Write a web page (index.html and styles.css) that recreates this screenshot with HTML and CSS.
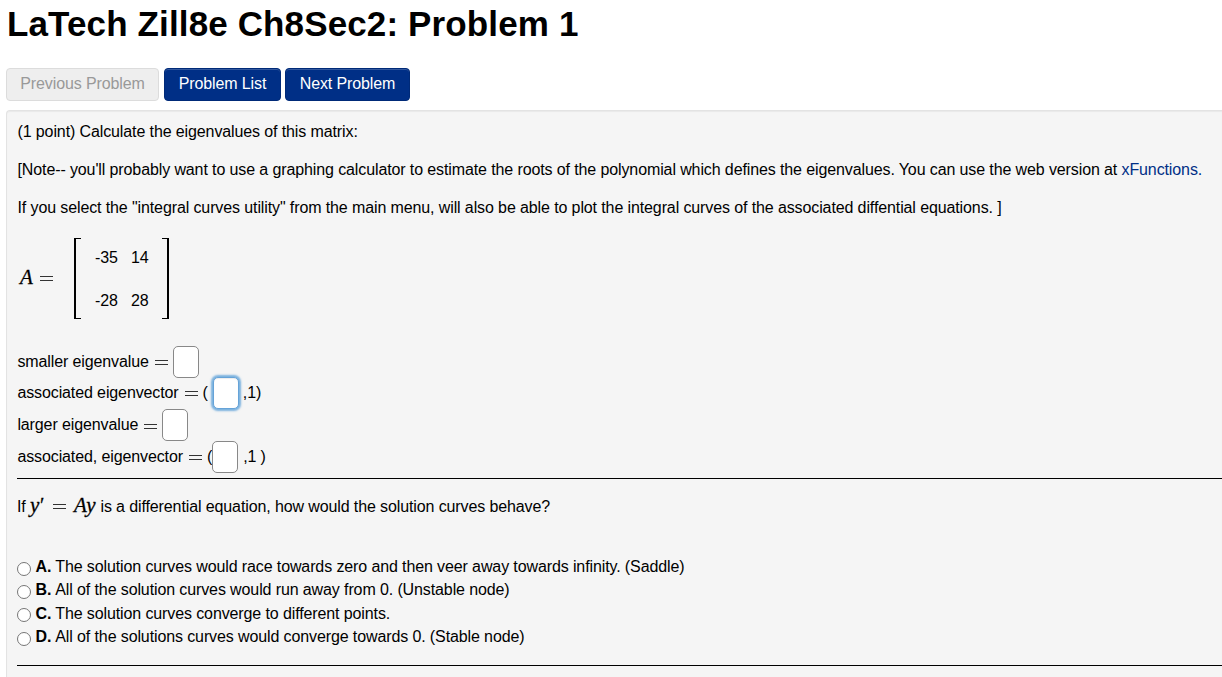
FILE: index.html
```html
<!DOCTYPE html>
<html lang="en">
<head>
    <meta charset="UTF-8">
    <title>LaTech Zill8e Ch8Sec2: Problem 1</title>
    <link rel="stylesheet" href="styles.css">
</head>
<body>
    <h1>LaTech Zill8e Ch8Sec2: Problem 1</h1>
    <div class="nav">
        <span class="btn disabled">Previous Problem</span>
        <a href="#" class="btn list">Problem List</a>
        <a href="#" class="btn next">Next Problem</a>
    </div>
    <div class="problem">
        <p>(1 point) Calculate the eigenvalues of this matrix:</p>
        <p>[Note-- you'll probably want to use a graphing calculator to estimate the roots of the polynomial which defines the eigenvalues. You can use the web version at <a href="#">xFunctions.</a></p>
        <p>If you select the "integral curves utility" from the main menu, will also be able to plot the integral curves of the associated diffential equations. ]</p>
        <div class="matrix">
            <span class="math name"><i>A</i><span class="eq"></span></span>
            <div class="bracket left"></div>
            <div class="cells">
                <span>-35</span><span>14</span>
                <span>-28</span><span>28</span>
            </div>
            <div class="bracket right"></div>
        </div>
        <div class="answers">
            <div class="row">smaller eigenvalue<span class="eq"></span><input type="text"></div>
            <div class="row second">associated eigenvector<span class="eq"></span><span class="open wide">(</span><input type="text" class="focus"><span class="after">,1)</span></div>
            <div class="row">larger eigenvalue<span class="eq"></span><input type="text"></div>
            <div class="row">associated, eigenvector<span class="eq"></span><span class="open">(</span><input type="text"><span class="after">,1 )</span></div>
        </div>
        <hr>
        <div class="question">If <span class="math"><i>y</i><span class="prime">′</span><span class="eq"></span><i>Ay</i></span> is a differential equation, how would the solution curves behave?</div>
        <div class="choices">
            <label><input type="radio" name="curve"><b>A.</b> <span>The solution curves would race towards zero and then veer away towards infinity. (Saddle)</span></label>
            <label><input type="radio" name="curve"><b>B.</b> <span>All of the solution curves would run away from 0. (Unstable node)</span></label>
            <label><input type="radio" name="curve"><b>C.</b> <span>The solution curves converge to different points.</span></label>
            <label><input type="radio" name="curve"><b>D.</b> <span>All of the solutions curves would converge towards 0. (Stable node)</span></label>
        </div>
        <hr>
    </div>
</body>
</html>
```
FILE: styles.css
```css
* {
    box-sizing: border-box;
}
body {
    margin: 0;
    padding: 0 0 0 6px;
    background-color: white;
    color: black;
    font: 16px/24px "Liberation Sans", Arial, sans-serif;
    letter-spacing: -0.112px;
}
h1 {
    margin: 0;
    padding: 4px 0 0 1px;
    height: 68px;
    font-size: 35px;
    line-height: 40px;
    letter-spacing: 0.13px;
    white-space: nowrap;
}
a {
    color: #002f86;
    text-decoration: none;
}
.nav {
    display: flex;
    gap: 4px;
    height: 42px;
}
.btn {
    height: 33px;
    padding: 3px 0 0;
    border: 1px solid #002a78;
    border-radius: 4px;
    background-color: #002f86;
    color: white;
    text-align: center;
    box-shadow: inset 0 1px 0 rgba(255,255,255,.2);
}
.btn.list {
    width: 117px;
}
.btn.next {
    width: 125px;
}
.btn.disabled {
    width: 153px;
    margin-right: 1px;
    border-color: #dcdcdc;
    background-color: #eeeeee;
    color: #999;
    box-shadow: none;
}
.problem {
    height: 567px;
    padding: 9px 0 0 10px;
    border: 1px solid #e3e3e3;
    border-width: 1px 0 0 1px;
    border-radius: 4px 0 0 0;
    background-color: #f5f5f5;
    box-shadow: inset 0 1px 1px rgba(0,0,0,.05);
}
p {
    margin: 0 0 14px;
    padding-left: 0.5px;
    white-space: nowrap;
}
.math {
    font: 21px/24px "Liberation Serif", serif;
    -webkit-text-stroke: 0.3px black;
}
.eq {
    display: inline-block;
    width: 13px;
    height: 5px;
    border: solid #333;
    border-width: 1px 0;
    vertical-align: 3px;
}
.matrix {
    display: flex;
    align-items: center;
    width: 152px;
    height: 81px;
    margin-top: 18px;
}
.matrix .name {
    width: 57px;
    padding: 0 0 3px 3px;
}
.matrix .eq {
    margin-left: 7px;
}
.bracket {
    width: 7px;
    height: 81px;
    border: solid black;
    border-width: 1px 2px;
}
.left {
    border-right: none;
}
.right {
    border-left: none;
}
.cells {
    display: grid;
    grid-template-columns: 36px 31px;
    grid-template-rows: 43px 43px;
    width: 81px;
    padding-left: 14px;
    line-height: 43px;
}
.answers {
    margin-top: 27px;
    height: 132px;
}
.row {
    display: flex;
    align-items: center;
    height: 31.7px;
    padding-left: 0.4px;
}
.row.second {
    padding-bottom: 2px;
}
.row .eq {
    margin: 2px 5px 0 6px;
}
.row input {
    width: 26px;
    height: 32px;
    margin: 0;
    border: 1px solid #888;
    border-radius: 5px;
    background-color: white;
}
.row input.focus {
    border-color: #66a3d8;
    box-shadow: inset 0 1px 1px rgba(0,0,0,.075), 0 0 2px 2px rgba(82,155,215,.75);
    outline: none;
}
.open.wide {
    margin-right: 5px;
}
.after {
    margin-left: 5px;
}
.row.second .after {
    margin-left: 4px;
}
hr {
    margin: 0;
    border: 0;
    border-top: 1px solid black;
}
.question {
    height: 76px;
    padding-top: 14px;
    white-space: nowrap;
}
.question .math {
    letter-spacing: 0.6px;
}
.question .eq {
    margin: 0 8px;
}
.prime {
    font-size: 20px;
}
.choices {
    height: 110px;
}
.choices label {
    display: flex;
    height: 23.4px;
    white-space: nowrap;
}
.choices input {
    appearance: none;
    width: 14px;
    height: 14px;
    margin: 6.5px 4.5px 0 0;
    border: 1px solid #767676;
    border-radius: 50%;
    background-color: white;
}
.choices b {
    margin-right: 4px;
}
```
